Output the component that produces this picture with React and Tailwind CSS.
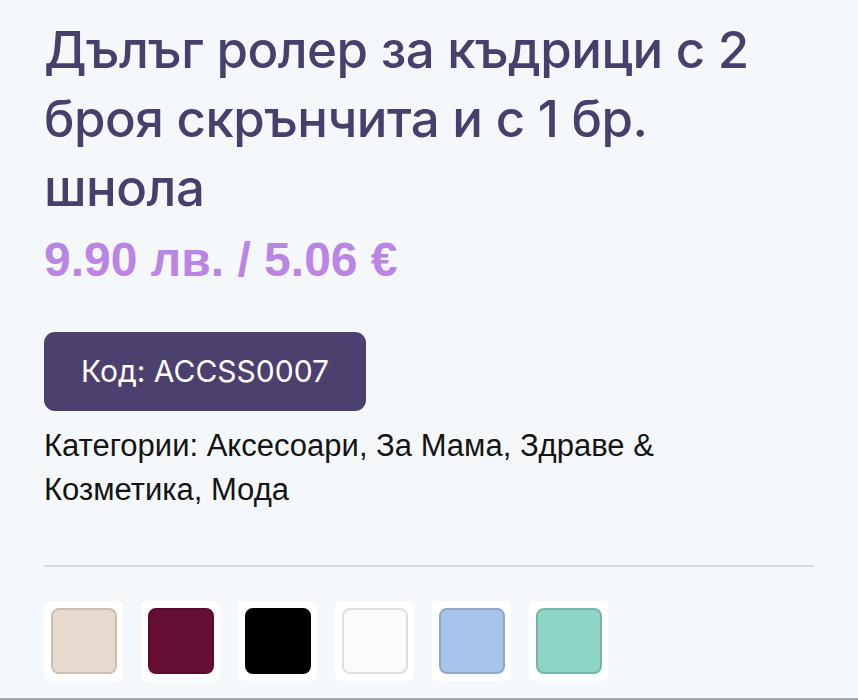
export default function App() {
  const swatches = [
    { bg: "bg-[#e6d9cd]", border: "border-[#cbbfb3]" },
    { bg: "bg-[#660f35]", border: "border-[#5a0c2e]" },
    { bg: "bg-[#000000]", border: "border-[#000000]" },
    { bg: "bg-[#fbfbfb]", border: "border-[#dedede]" },
    { bg: "bg-[#a7c5eb]", border: "border-[#90a8c8]" },
    { bg: "bg-[#8dd6c5]", border: "border-[#79b5a6]" },
  ];
  return (
    <div className="w-full h-[700px] overflow-hidden bg-[#f5f8fa] px-[44px] pt-[15px] border-b-2 border-[#a9a9a9]">
      <h1 className="font-['Inter',sans-serif] font-medium text-[51px] leading-[69px] text-[#473f6c] tracking-[-0.5px]">
        Дълъг ролер за къдрици с 2 броя скрънчита и с 1 бр. шнола
      </h1>
      <div className="mt-[12px] font-['Liberation_Sans',Arial,sans-serif] font-bold text-[48px] leading-[52px] text-[#ba85e5]">
        9.90 лв. / 5.06 €
      </div>
      <div className="mt-[46px] flex items-center justify-center w-[322px] h-[79px] rounded-[11px] bg-[#4c416e] text-white font-['Inter',sans-serif] text-[30px]">
        Код: ACCSS0007
      </div>
      <p className="mt-[13px] font-['Liberation_Sans',Arial,sans-serif] text-[31px] leading-[44px] text-[#141414]">
        Категории: Аксесоари, За Мама, Здраве &amp;
        <br />
        Козметика, Мода
      </p>
      <div className="mt-[53px] h-[2px] bg-[#d4dbe1]" />
      <div className="mt-[34px] flex gap-[18px]">
        {swatches.map((s, i) => (
          <div key={i} className="w-[79px] h-[80px] bg-white rounded-[6px] flex items-center justify-center">
            <div className={`w-[66px] h-[66px] rounded-[8px] border-2 ${s.bg} ${s.border}`} />
          </div>
        ))}
      </div>
    </div>
  );
}
